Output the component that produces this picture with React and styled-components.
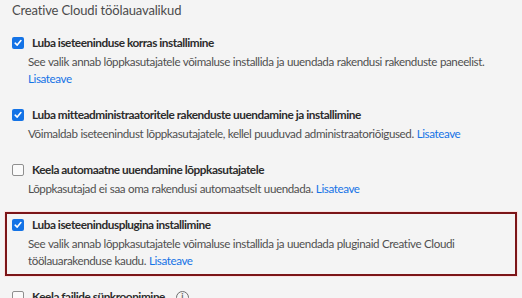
import React from "react";
import styled, { createGlobalStyle } from "styled-components";

const GlobalStyle = createGlobalStyle`
  html, body {
    margin: 0;
    background: #f4f4f4;
  }
  body {
    font-family: Lato, "Liberation Sans", sans-serif;
    color: #2c2c2c;
  }
`;

const StyledPage = styled.div`
  display: flex;
  flex-direction: column;
  padding: 1px 5px 0;
`;

const StyledTitle = styled.h3`
  margin: 0 0 11px 7px;
  font-size: 13px;
  font-weight: 400;
  letter-spacing: -0.15px;
  line-height: 18px;
  color: #4b4b4b;
`;

const StyledList = styled.div`
  display: flex;
  flex-direction: column;
  gap: 8px;
`;

const StyledOption = styled.div`
  display: flex;
  flex-direction: column;
  gap: 1px;
  padding: 2px 5px 5px;
  border: 2px solid ${(p) => (p.$highlight ? "#7b1518" : "transparent")};
  box-shadow: ${(p) => (p.$highlight ? "0 0 0 1px #fbe3e3" : "none")};
`;

const StyledLabelRow = styled.label`
  display: flex;
  align-items: center;
  gap: 8px;
  font-size: 11.8px;
  font-weight: 700;
  letter-spacing: -0.45px;
  line-height: 18px;
  color: #2c2c2c;
`;

const StyledBox = styled.span`
  box-sizing: border-box;
  flex: none;
  display: inline-flex;
  align-items: center;
  justify-content: center;
  width: 12px;
  height: 12px;
  border-radius: 2px;
  background: ${(p) => (p.$checked ? "#1473e6" : "#fafafa")};
  border: ${(p) => (p.$checked ? "none" : "1.5px solid #8f8f8f")};
`;

const StyledDesc = styled.p`
  margin: 0 0 0 16px;
  font-size: 11.6px;
  letter-spacing: -0.4px;
  word-spacing: 0.3px;
  line-height: 17px;
  color: #505050;
`;

const StyledLink = styled.a`
  color: #1473e6;
  text-decoration: none;
`;

const StyledInfo = styled.span`
  box-sizing: border-box;
  display: inline-flex;
  align-items: center;
  justify-content: center;
  width: 13px;
  height: 13px;
  margin-left: 3px;
  border: 1.2px solid #6e6e6e;
  border-radius: 50%;
  font-size: 9px;
  font-weight: 700;
  letter-spacing: 0;
  color: #6e6e6e;
`;

const Check = ({ checked }) => (
  <StyledBox $checked={checked}>
    {checked && (
      <svg width="8" height="8" viewBox="0 0 8 8">
        <path d="M1.2 4.2 L3.2 6.1 L6.9 1.6" fill="none" stroke="#fff" strokeWidth="1.6" strokeLinecap="round" strokeLinejoin="round" />
      </svg>
    )}
  </StyledBox>
);

const options = [
  {
    label: "Luba iseteeninduse korras installimine",
    checked: true,
    desc: "See valik annab lõppkasutajatele võimaluse installida ja uuendada rakendusi rakenduste paneelist.",
    linkBreak: true,
  },
  {
    label: "Luba mitteadministraatoritele rakenduste uuendamine ja installimine",
    checked: true,
    desc: "Võimaldab iseteenindust lõppkasutajatele, kellel puuduvad administraatoriõigused.",
  },
  {
    label: "Keela automaatne uuendamine lõppkasutajatele",
    checked: false,
    desc: "Lõppkasutajad ei saa oma rakendusi automaatselt uuendada.",
  },
  {
    label: "Luba iseteenindusplugina installimine",
    checked: true,
    highlight: true,
    desc: "See valik annab lõppkasutajatele võimaluse installida ja uuendada pluginaid Creative Cloudi",
    tail: "töölauarakenduse kaudu.",
  },
];

const App = () => {
  return (
    <>
      <GlobalStyle />
      <StyledPage>
        <StyledTitle>Creative Cloudi töölauavalikud</StyledTitle>
        <StyledList>
          {options.map((o) => (
            <StyledOption key={o.label} $highlight={o.highlight}>
              <StyledLabelRow>
                <Check checked={o.checked} />
                {o.label}
              </StyledLabelRow>
              <StyledDesc>
                {o.desc}
                {o.linkBreak ? <br /> : " "}
                {o.tail && (
                  <>
                    <br />
                    {o.tail}{" "}
                  </>
                )}
                <StyledLink href="#">Lisateave</StyledLink>
              </StyledDesc>
            </StyledOption>
          ))}
          <StyledOption>
            <StyledLabelRow>
              <Check checked={false} />
              Keela failide sünkroonimine
              <StyledInfo>i</StyledInfo>
            </StyledLabelRow>
          </StyledOption>
        </StyledList>
      </StyledPage>
    </>
  );
};

export default App;
